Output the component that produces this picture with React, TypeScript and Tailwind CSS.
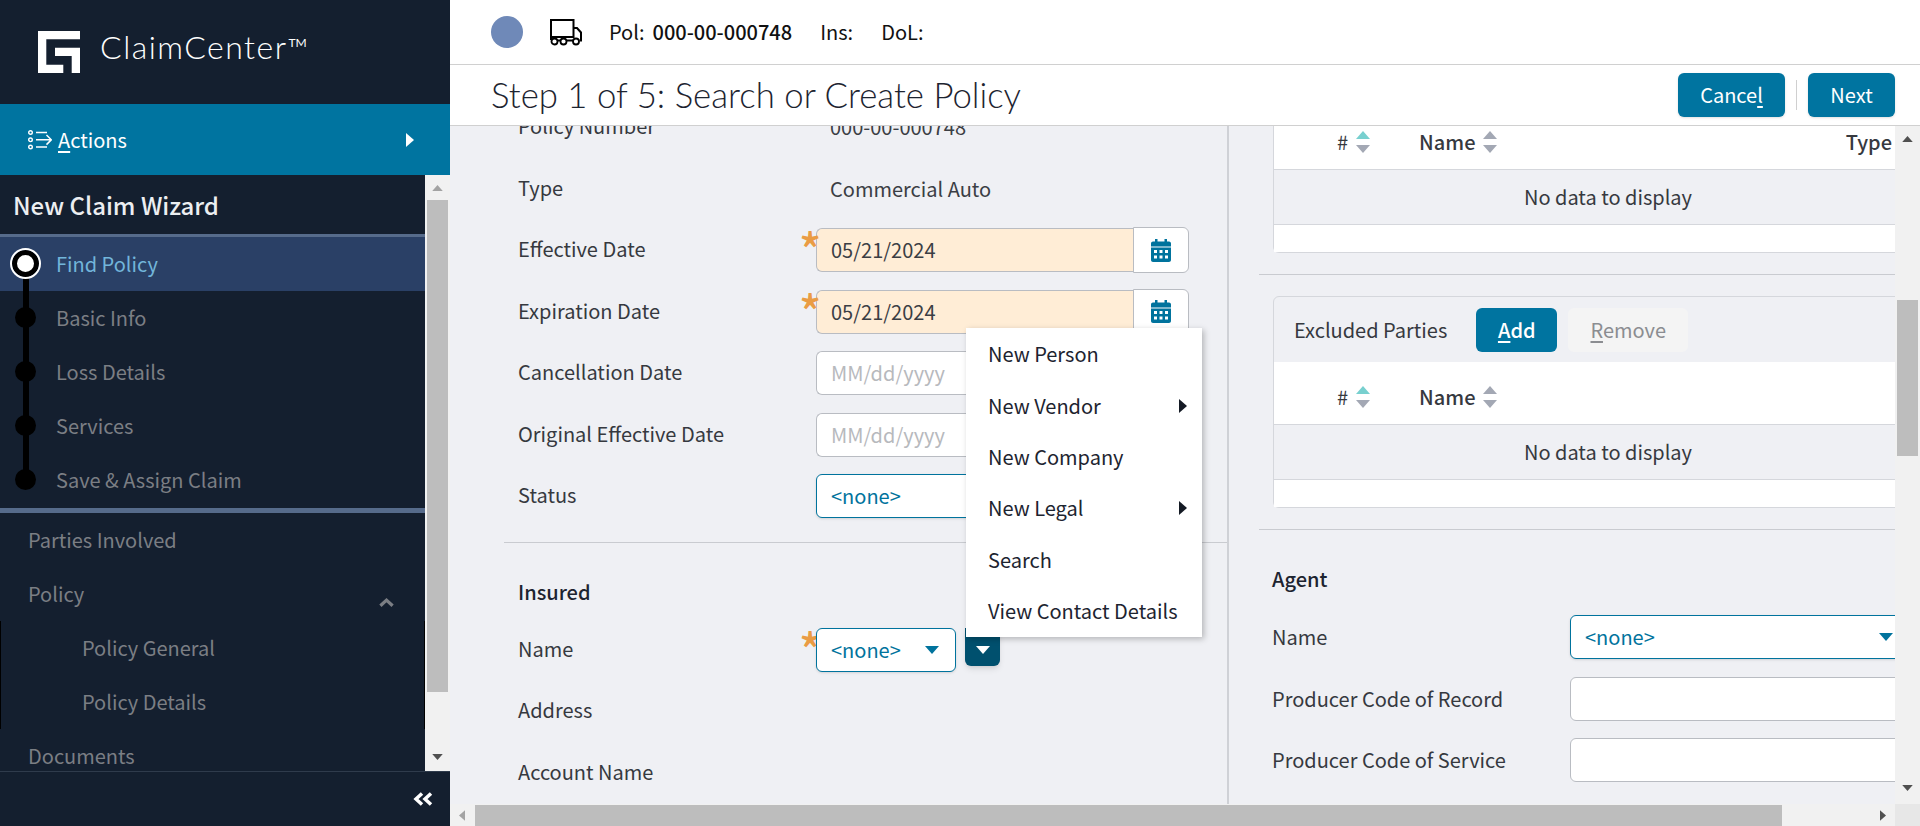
function Triangle({ dir, className }: { dir: "up" | "down" | "left" | "right"; className: string }) {
    const points = {
        up: "0,8 7,0 14,8",
        down: "0,0 14,0 7,8",
        left: "8,0 8,14 0,7",
        right: "0,0 8,7 0,14",
    }[dir];
    const box = dir === "up" || dir === "down" ? "0 0 14 8" : "0 0 8 14";
    return (
        <svg viewBox={box} className={className}>
            <polygon points={points} fill="currentColor" />
        </svg>
    );
}

function Logo() {
    return (
        <svg viewBox="0 0 42 42" className="w-[42px] h-[42px] text-white">
            <path fill="currentColor" d="M0 0H42V8.3H8.3V33.7H25.3V42H0Z" />
            <path fill="currentColor" d="M17 16.7H42V42H33.7V25H17Z" />
        </svg>
    );
}

function ActionsIcon() {
    return (
        <svg viewBox="0 0 24 20" className="w-6 h-5 text-white" fill="none" stroke="currentColor">
            <circle cx="2.5" cy="2.5" r="1.8" strokeWidth="1.4" />
            <circle cx="2.5" cy="9.8" r="1.8" strokeWidth="1.4" />
            <circle cx="2.5" cy="17" r="1.8" strokeWidth="1.4" />
            <path d="M8 2.5H19M8 9.8H23M8 17H19M18.5 5L23.3 9.8L18.5 14.6" strokeWidth="1.5" />
        </svg>
    );
}

function TruckIcon() {
    return (
        <svg viewBox="0 0 32 27" className="w-8 h-[27px] text-black" fill="none" stroke="currentColor" strokeWidth="2">
            <path d="M1 18V1H23.5V18H1" />
            <path d="M23.5 9H27L31 13.5V21.5H29.5" />
            <path d="M1 18V21M7.5 21.5H10.5M16.5 21.5H23" />
            <circle cx="4.5" cy="22.5" r="3" strokeWidth="1.8" />
            <circle cx="13.5" cy="22.5" r="3" strokeWidth="1.8" />
            <circle cx="26" cy="22.5" r="3" strokeWidth="1.8" />
        </svg>
    );
}

function CalendarIcon() {
    return (
        <svg viewBox="0 0 20 23" className="w-5 h-[23px] text-[#00739d]">
            <path
                fill="currentColor"
                fillRule="evenodd"
                d="M4 0H6.5V2.5H13.5V0H16V2.5H18C19.1 2.5 20 3.4 20 4.5V7.5H0V4.5C0 3.4 .9 2.5 2 2.5H4ZM0 8.5H20V21C20 22.1 19.1 23 18 23H2C.9 23 0 22.1 0 21ZM3 11V14H6V11ZM8.5 11V14H11.5V11ZM14 11V14H17V11ZM3 16.5V19.5H6V16.5ZM8.5 16.5V19.5H11.5V16.5ZM14 16.5V19.5H17V16.5Z"
            />
        </svg>
    );
}

function SortArrows({ active }: { active?: boolean }) {
    return (
        <span className="flex flex-col gap-[6px] ml-2">
            <Triangle dir="up" className={`w-[14px] h-2 ${active ? "text-[#78d0cf]" : "text-[#a3a8b4]"}`} />
            <Triangle dir="down" className="w-[14px] h-2 text-[#a3a8b4]" />
        </span>
    );
}

function Row({ label, children }: { label: string; children?: React.ReactNode }) {
    return (
        <div className="flex items-center h-11 mb-[17.5px]">
            <div className="w-[298px] shrink-0 pb-0.5 text-[#36393f]">{label}</div>
            {children}
        </div>
    );
}

function Asterisk() {
    return <span className="absolute -left-[17px] -top-[3px] text-[#ea9c44] text-[46px] leading-[46px] font-medium">*</span>;
}

function DateField({ value, required }: { value: string; required?: boolean }) {
    return (
        <div className="relative flex h-11 w-[373px]">
            {required && <Asterisk />}
            <div className={`flex items-center flex-1 pl-[14px] border border-[#b9bcc2] border-r-0 rounded-l-[6px] ${value ? "bg-[#ffedd6] text-[#3b3e44]" : "bg-white text-[#b7b9bd]"}`}>
                {value || "MM/dd/yyyy"}
            </div>
            <div className="flex items-center justify-center w-14 -my-px bg-white border border-[#b9bcc2] rounded-r-[6px]">
                <CalendarIcon />
            </div>
        </div>
    );
}

function NoneSelect({ className }: { className: string }) {
    return (
        <div className={`relative flex items-center justify-between h-11 pl-[14px] pr-[16px] bg-white border border-[#00739d] rounded-[6px] text-[#00739d] shadow-sm ${className}`}>
            <span>&lt;none&gt;</span>
            <Triangle dir="down" className="w-[14px] h-2 text-[#00739d]" />
        </div>
    );
}

function WizardStep({ label, active, last }: { label: string; active?: boolean; last?: boolean }) {
    return (
        <div className={`relative flex items-center h-[54px] pl-[56px] ${active ? "bg-[#2a4066] text-[#72b5da]" : "text-[#7b7e84]"}`}>
            {!last && <span className="absolute left-[23px] top-[27px] h-[54px] w-[6px] bg-black z-10" />}
            {active ? (
                <span className="absolute left-3 top-[13px] z-20 w-[27px] h-[27px] rounded-full bg-white border-[5px] border-black outline-2 outline-white" />
            ) : (
                <span className="absolute left-[15px] top-4 z-20 w-[21px] h-[21px] rounded-full bg-black" />
            )}
            {label}
        </div>
    );
}

function NavItem({ label, indent }: { label: string; indent?: boolean }) {
    return (
        <div className={`flex items-center h-[54px] text-[#7b7e84] ${indent ? "pl-[81px] border-x border-black" : "pl-[28px]"}`}>
            {label}
        </div>
    );
}

function Sidebar() {
    return (
        <aside className="flex flex-col w-[450px] shrink-0 h-full bg-[#141f2f]">
            <div className="flex items-center h-[104px] pl-[38px] shrink-0">
                <Logo />
                <span className="ml-5 -mt-0.5 text-white font-['Lato',sans-serif] font-light text-[32px] leading-10 tracking-[1.5px]">
                    ClaimCenter<span className="relative -top-[12px] ml-px text-[12px] font-normal tracking-normal">TM</span>
                </span>
            </div>
            <div className="flex items-center h-[71px] shrink-0 pl-7 pr-9 bg-[#0074a0] text-white text-[20px]">
                <ActionsIcon />
                <span className="ml-[6px]"><u className="underline-offset-3">A</u>ctions</span>
                <Triangle dir="right" className="w-2 h-[14px] ml-auto text-white" />
            </div>
            <div className="flex flex-1 min-h-0">
                <nav className="w-[425px] overflow-hidden">
                    <div className="flex items-center h-[59px] pl-[13px] text-[24px] font-medium text-[#eceef1]">New Claim Wizard</div>
                    <div className="border-t-[3px] border-[#566b8b]" />
                    <WizardStep label="Find Policy" active />
                    <WizardStep label="Basic Info" />
                    <WizardStep label="Loss Details" />
                    <WizardStep label="Services" />
                    <WizardStep label="Save & Assign Claim" last />
                    <div className="h-[5px] mt-[1px] bg-[#566b8b]" />
                    <NavItem label="Parties Involved" />
                    <div className="relative">
                        <NavItem label="Policy" />
                        <svg viewBox="0 0 16 10" className="absolute left-[379px] top-[30px] w-[15px] h-[10px] text-[#7b7e84]" fill="none" stroke="currentColor" strokeWidth="3.5">
                            <path d="M1.5 9L8 3L14.5 9" />
                        </svg>
                    </div>
                    <NavItem label="Policy General" indent />
                    <NavItem label="Policy Details" indent />
                    <NavItem label="Documents" />
                </nav>
                <div className="flex flex-col items-center w-[25px] pt-[10px] pb-[11px] bg-[#f1f1f1]">
                    <Triangle dir="up" className="w-[11px] h-[6px] text-[#a3a3a3]" />
                    <div className="w-[21px] h-[492px] mt-[9px] bg-[#bdbdbd]" />
                    <Triangle dir="down" className="w-[11px] h-[6px] mt-auto text-[#505050]" />
                </div>
            </div>
            <div className="flex items-center justify-end h-[55px] shrink-0 pr-[17px] border-t border-[#2f3b4c] text-white">
                <svg viewBox="0 0 20 14" className="w-5 h-[14px]" fill="none" stroke="currentColor" strokeWidth="3.5">
                    <path d="M9 1.5L3 7L9 12.5M18 1.5L12 7L18 12.5" />
                </svg>
            </div>
        </aside>
    );
}

function DataTable({ headHeight, showType }: { headHeight: string; showType?: boolean }) {
    return (
        <>
            <div className={`flex items-end pb-[13px] pl-[63px] pr-[18px] bg-white font-medium text-[#36393f] ${headHeight}`}>
                <div className="flex items-center w-full h-7">
                    <span className="font-normal">#</span>
                    <SortArrows active />
                    <span className="ml-[49px]">Name</span>
                    <SortArrows />
                    {showType && <span className="ml-auto">Type</span>}
                </div>
            </div>
            <div className="flex items-center justify-center h-[56px] bg-[#eff0f4] border-y border-[#d5d7dc] text-[#36393f] pl-[32px]">
                No data to display
            </div>
            <div className="h-[27px] bg-white" />
        </>
    );
}

function Menu() {
    const items = [
        { label: "New Person" },
        { label: "New Vendor", sub: true },
        { label: "New Company" },
        { label: "New Legal", sub: true },
        { label: "Search" },
        { label: "View Contact Details" },
    ];
    return (
        <div className="absolute left-[516px] top-[202px] w-[236px] h-[309px] py-[0.5px] bg-white text-[#1d2430] shadow-[2px_2px_6px_rgba(0,0,0,0.25)] z-30">
            {items.map((item) => (
                <div key={item.label} className="flex items-center justify-between h-[51.4px] pl-[22px] pr-[15px]">
                    {item.label}
                    {item.sub && <Triangle dir="right" className="w-2 h-[14px] text-[#141a24]" />}
                </div>
            ))}
        </div>
    );
}

function LeftColumn() {
    return (
        <div className="relative w-[779px] shrink-0 border-r-2 border-[#cfd1d6] pl-[54px]">
            <div className="-mt-[21px]">
                <div className="pl-[14px]">
                    <Row label="Policy Number"><span className="ml-[14px] text-[#3b3e44]">000-00-000748</span></Row>
                    <Row label="Type"><span className="ml-[14px] text-[#3b3e44]">Commercial Auto</span></Row>
                    <Row label="Effective Date"><DateField value="05/21/2024" required /></Row>
                    <Row label="Expiration Date"><DateField value="05/21/2024" required /></Row>
                    <Row label="Cancellation Date"><DateField value="" /></Row>
                    <Row label="Original Effective Date"><DateField value="" /></Row>
                    <Row label="Status"><NoneSelect className="w-[373px]" /></Row>
                </div>
                <div className="border-t border-[#c9cbd0] mt-[23.5px] mb-[27px]" />
                <div className="pl-[14px]">
                    <div className="h-11 flex items-center font-medium text-[#1d2430] mb-[14px]">Insured</div>
                    <Row label="Name">
                        <div className="relative">
                            <Asterisk />
                            <NoneSelect className="w-[140px]" />
                        </div>
                        <div className="flex items-center justify-center w-[35px] h-[38px] ml-[9px] -mt-[6px] bg-[#00506e] rounded-b-[6px] shadow-md">
                            <Triangle dir="down" className="w-[14px] h-2 mt-[6px] text-white" />
                        </div>
                    </Row>
                    <Row label="Address" />
                    <Row label="Account Name" />
                </div>
            </div>
            <Menu />
        </div>
    );
}

function RightColumn() {
    return (
        <div className="flex-1 min-w-0 overflow-hidden pl-[30px]">
            <div className="ml-[14px] -mr-4 border-x border-b border-[#d5d7dc] rounded-bl-[6px]">
                <DataTable headHeight="h-[43px]" showType />
            </div>
            <div className="border-t border-[#c9cbd0] mt-[21px]" />
            <div className="ml-[14px] -mr-4 mt-[21px] border border-[#d5d7dc] rounded-l-[6px]">
                <div className="flex items-center h-[65px] pl-5">
                    <span className="text-[#36393f]">Excluded Parties</span>
                    <button className="flex items-center justify-center w-[81px] h-11 ml-[29px] rounded-[6px] bg-[#0074a0] text-white font-medium">
                        <span><u className="underline-offset-3">A</u>dd</span>
                    </button>
                    <button className="flex items-center justify-center w-[120px] h-11 ml-[11px] rounded-[6px] bg-[#f4f4f4] text-[#8b8d91]">
                        <span><u className="underline-offset-3">R</u>emove</span>
                    </button>
                </div>
                <DataTable headHeight="h-[62px]" />
            </div>
            <div className="border-t border-[#c9cbd0] mt-[21px]" />
            <div className="pl-[13px] pt-[27px]">
                <div className="h-11 flex items-center font-medium text-[#1d2430] mb-[14px]">Agent</div>
                <div className="flex items-center h-11 mb-[17.5px]">
                    <div className="w-[298px] shrink-0 text-[#36393f]">Name</div>
                    <NoneSelect className="w-[340px] shrink-0" />
                </div>
                <div className="flex items-center h-11 mb-[17.5px]">
                    <div className="w-[298px] shrink-0 text-[#36393f]">Producer Code of Record</div>
                    <div className="w-[340px] shrink-0 h-11 bg-white border border-[#b9bcc2] rounded-[6px]" />
                </div>
                <div className="flex items-center h-11">
                    <div className="w-[298px] shrink-0 text-[#36393f]">Producer Code of Service</div>
                    <div className="w-[340px] shrink-0 h-11 bg-white border border-[#b9bcc2] rounded-[6px]" />
                </div>
            </div>
        </div>
    );
}

export default function App() {
    return (
        <div className="flex w-[1920px] h-[826px] overflow-hidden bg-white text-[20px] leading-7 font-['Noto_Sans_CJK_SC',sans-serif]">
            <Sidebar />
            <main className="flex flex-col flex-1 min-w-0">
                <div className="flex items-center h-[65px] shrink-0 pl-[41px] border-b border-[#d0d0d0] text-[#111]">
                    <span className="w-8 h-8 rounded-full bg-[#6f89b8]" />
                    <span className="ml-[27px]"><TruckIcon /></span>
                    <span className="ml-[27px]">Pol:</span>
                    <span className="ml-2 font-medium">000-00-000748</span>
                    <span className="ml-7">Ins:</span>
                    <span className="ml-7">DoL:</span>
                </div>
                <div className="flex items-center h-[61px] shrink-0 pl-[41px] pr-[25px] border-b border-[#d0d0d0]">
                    <h1 className="text-[34.75px] leading-[44px] font-light font-['Lato',sans-serif] text-[#1d2430]">Step 1 of 5: Search or Create Policy</h1>
                    <button className="flex items-center justify-center w-[107px] h-11 ml-auto rounded-[6px] bg-[#0074a0] text-white shadow-sm">
                        <span>Cance<u className="underline-offset-3">l</u></span>
                    </button>
                    <span className="h-[30px] w-px mx-[11px] bg-[#d0d0d0]" />
                    <button className="flex items-center justify-center w-[87px] h-11 rounded-[6px] bg-[#0074a0] text-white shadow-sm">Next</button>
                </div>
                <div className="flex flex-1 min-h-0">
                    <div className="flex flex-1 min-w-0 overflow-hidden bg-[#eff0f4]">
                        <LeftColumn />
                        <RightColumn />
                    </div>
                    <div className="flex flex-col items-center w-[25px] shrink-0 pt-[10px] pb-[13px] bg-[#f1f1f1]">
                        <Triangle dir="up" className="w-[11px] h-[6px] text-[#505050]" />
                        <div className="w-[21px] h-[156px] mt-[158px] bg-[#bdbdbd]" />
                        <Triangle dir="down" className="w-[11px] h-[6px] mt-auto text-[#505050]" />
                    </div>
                </div>
                <div className="flex items-center h-[22px] shrink-0 bg-[#f1f1f1]">
                    <Triangle dir="left" className="w-[6px] h-[11px] ml-[9px] text-[#a3a3a3]" />
                    <div className="w-[1307px] h-[21px] ml-[10px] bg-[#bdbdbd]" />
                    <Triangle dir="right" className="w-[6px] h-[11px] ml-[98px] text-[#505050]" />
                    <div className="w-[25px] h-full ml-auto bg-[#e7e7e7]" />
                </div>
            </main>
        </div>
    );
}
